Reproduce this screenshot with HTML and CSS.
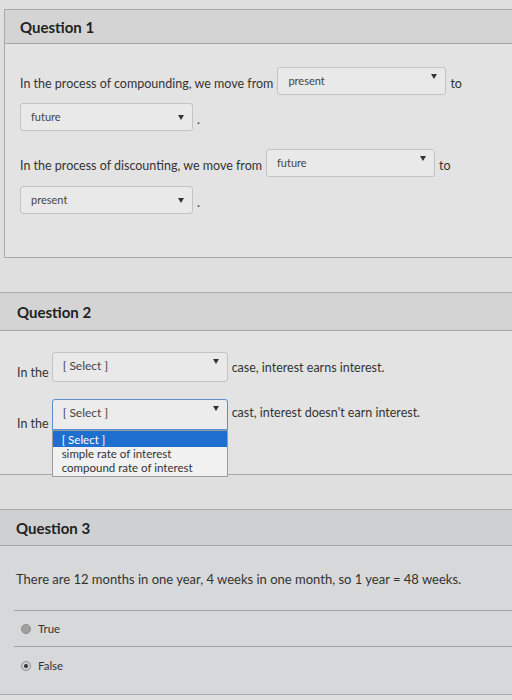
FILE: index.html
```html
<!DOCTYPE html>
<html lang="en">
<head>
    <meta charset="UTF-8">
    <title>Quiz</title>
    <link rel="stylesheet" href="styles.css">
</head>
<body>

<div class="question q1">
    <div class="question-header">Question 1</div>
    <div class="question-body">
        <div class="row">
            <span class="txt">In the process of compounding, we move from</span>
            <span class="dd wide"><span class="dd-val">present</span><span class="arrow"></span></span>
            <span class="txt">to</span>
        </div>
        <div class="row">
            <span class="dd"><span class="dd-val">future</span><span class="arrow"></span></span>
            <span class="txt">.</span>
        </div>
        <div class="row gap-top">
            <span class="txt">In the process of discounting, we move from</span>
            <span class="dd wide"><span class="dd-val">future</span><span class="arrow"></span></span>
            <span class="txt">to</span>
        </div>
        <div class="row">
            <span class="dd"><span class="dd-val">present</span><span class="arrow"></span></span>
            <span class="txt">.</span>
        </div>
    </div>
</div>

<div class="question q2">
    <div class="question-header">Question 2</div>
    <div class="question-body">
        <div class="row">
            <span class="txt low">In the</span>
            <span class="dd"><span class="dd-val">[ Select ]</span><span class="arrow"></span></span>
            <span class="txt">case, interest earns interest.</span>
        </div>
        <div class="row second">
            <span class="txt low">In the</span>
            <span class="dd focus">
                <span class="dd-val">[ Select ]</span><span class="arrow"></span>
                <span class="dd-menu">
                    <span class="opt on">[ Select ]</span>
                    <span class="opt">simple rate of interest</span>
                    <span class="opt">compound rate of interest</span>
                </span>
            </span>
            <span class="txt">cast, interest doesn't earn interest.</span>
        </div>
    </div>
</div>

<div class="question q3">
    <div class="question-header">Question 3</div>
    <div class="question-text">There are 12 months in one year, 4 weeks in one month, so 1 year = 48 weeks.</div>
    <div class="answers">
        <div class="answer"><span class="radio"></span>True</div>
        <div class="answer"><span class="radio checked"></span>False</div>
    </div>
</div>

</body>
</html>
```

FILE: styles.css
```css
*{
    margin: 0px;
    padding: 0px;
    box-sizing: border-box;
}
body{
    width: 512px;
    height: 700px;
    overflow: hidden;
    background-color: #dfdfdf;
    font-family: Lato, "Open Sans", sans-serif;
    color: #333;
    padding-top: 9px;
}
.question{
    border-top: 1px solid #a9a9a9;
    border-bottom: 1px solid #a9a9a9;
    background-color: #e3e3e3;
}
.question-header{
    font-weight: bold;
    font-size: 15px;
    color: #222;
    background-color: #d4d4d4;
    border-bottom: 1px solid #a6a6a6;
    height: 34px;
    line-height: 34px;
}

/* first card has a left edge */
.q1{
    margin-left: 4px;
    border-left: 1px solid #a9a9a9;
    height: 249px;
}
.q1 .question-header{
    padding-left: 15px;
}
.q1 .question-body{
    padding: 23px 0 0 15px;
}

.row{
    display: flex;
    align-items: center;
    font-size: 12.5px;
    height: 28px;
    margin-bottom: 8px;
}
.row.gap-top{
    margin-top: 18px;
    margin-bottom: 9px;
}
.txt{
    padding-top: 4px;
    white-space: nowrap;
}
.txt.low{
    padding-top: 10px;
}

.dd{
    position: relative;
    display: flex;
    align-items: center;
    width: 173px;
    height: 28px;
    margin: 0 4px 0 0;
    padding-left: 10px;
    background-color: #e9e9e9;
    border: 1px solid #c3c3c3;
    border-radius: 3px;
    font-size: 11px;
    color: #444;
}
.dd.wide{
    width: 169px;
    margin-left: 4px;
}
.dd-val{
    flex: 1;
    margin-top: -2px;
}
.arrow{
    width: 0;
    height: 0;
    margin-right: 8px;
    border-left: 3px solid transparent;
    border-right: 3px solid transparent;
    border-top: 5px solid #333;
}
.q1 .row .dd.wide .arrow{
    margin-top: -9px;
}

.q2{
    margin-top: 34px;
    height: 183px;
}
.q2 .question-header{
    padding-left: 17px;
    height: 38px;
    line-height: 38px;
}
.q2 .question-body{
    padding: 21px 0 0 17px;
}
.q2 .row{
    height: 30px;
    margin-bottom: 17px;
}
.q2 .dd{
    width: 176px;
    height: 30px;
    margin-left: 3px;
    font-size: 12px;
}
.q2 .dd .arrow{
    margin-top: -12px;
}
.q2 .dd-val{
    margin-top: -4px;
}
.q2 .dd.focus{
    height: 31px;
    border: 1px solid #5a8fd0;
    border-radius: 3px 3px 0 0;
    background-color: #ececec;
}
.q2 .row .txt{
    padding-top: 0;
}
.q2 .row .txt.low{
    padding-top: 10px;
}
.q2 .second .txt{
    padding-top: 0;
    margin-top: -4px;
}
.q2 .second .txt.low{
    margin-top: 9px;
}

/* open option list of the focused dropdown */
.dd-menu{
    position: absolute;
    left: -1px;
    top: 30px;
    width: 176px;
    background-color: #f1f1f1;
    border: 1px solid #9a9a9a;
    display: flex;
    flex-direction: column;
    font-size: 11.5px;
    line-height: 14px;
    color: #333;
    z-index: 2;
    padding-bottom: 1px;
}
.opt{
    padding-left: 9px;
}
.opt.on{
    background-color: #1e6fcf;
    color: #fff;
    height: 16px;
    line-height: 17px;
}

.q3{
    margin-top: 34px;
    background-color: #d7d8d9;
}
.q3 .question-header{
    padding-left: 16px;
    height: 36px;
    line-height: 36px;
    background-color: #cfd0d1;
}
.question-text{
    padding: 25px 0 0 16px;
    font-size: 13px;
    height: 64px;
}
.answers{
    margin-left: 14px;
    border-top: 1px solid #a4a4a4;
}
.answer{
    display: flex;
    align-items: center;
    height: 36px;
    padding-left: 7px;
    font-size: 11.5px;
    border-bottom: 1px solid #a4a4a4;
}
.answer:last-child{
    height: 47px;
    align-items: flex-start;
    padding-top: 12px;
    border-bottom: none;
}
.radio{
    width: 10px;
    height: 10px;
    border-radius: 50%;
    background-color: #a0a0a0;
    border: 1px solid #8c8c8c;
    margin-right: 7px;
    position: relative;
}
.answer:last-child .radio{
    margin-top: 2px;
}
.radio.checked{
    background-color: #cfcfcf;
}
.radio.checked:after{
    content: "";
    position: absolute;
    left: 2px;
    top: 2px;
    width: 4px;
    height: 4px;
    border-radius: 50%;
    background-color: #333;
}
```
